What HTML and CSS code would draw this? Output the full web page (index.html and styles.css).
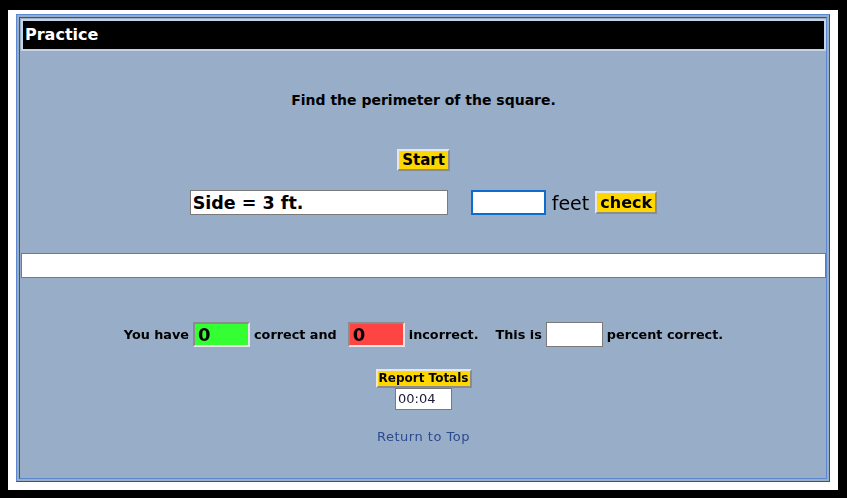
FILE: index.html
```html
<!DOCTYPE html>
<html lang="en">
<head>
    <meta charset="UTF-8">
    <title>Practice</title>
    <link rel="stylesheet" href="styles.css">
</head>
<body>
    <div class="page">
        <div class="frame">
            <div class="cell">
                <div class="title-bar">Practice</div>

                <p class="question">Find the perimeter of the square.</p>

                <div class="start-row">
                    <button class="btn btn-start">Start</button>
                </div>

                <div class="answer-row">
                    <input type="text" class="side-box" value="Side = 3 ft." readonly>
                    <input type="text" class="answer-box" autofocus>
                    <span class="unit">feet</span>
                    <button class="btn btn-check">check</button>
                </div>

                <div class="feedback"></div>

                <div class="score-row">
                    <span>You have</span>
                    <span class="score-box correct">0</span>
                    <span class="gap-sm">correct and</span>
                    <span class="score-box wrong">0</span>
                    <span class="gap-lg">incorrect.</span>
                    <span>This is</span>
                    <span class="score-box percent"></span>
                    <span>percent correct.</span>
                </div>

                <div class="totals">
                    <button class="btn btn-report">Report Totals</button>
                    <span class="timer">00:04</span>
                    <a href="#" class="top-link">Return to Top</a>
                </div>
            </div>
        </div>
    </div>
</body>
</html>
```

FILE: styles.css
```css
* {
    margin: 0;
    padding: 0;
    box-sizing: border-box;
}

body {
    background-color: #000;
    font-family: 'DejaVu Sans', Verdana, sans-serif;
    color: #000;
    padding: 10px 9px 8px 8px;
}

.page {
    background-color: #fff;
    padding: 4px 8px 8px 8px;
    width: 830px;
    height: 480px;
}

.frame {
    height: 100%;
    border: 1px solid;
    border-color: #5b88cf #2f568c #2f568c #5b88cf;
    background-color: #98adc8;
    padding: 2px;
}

.cell {
    height: 100%;
    border: 1px solid;
    border-color: #2f568c #5b88cf #5b88cf #2f568c;
    padding: 1px 0 0 1px;
    text-align: center;
}

.title-bar {
    background-color: #000;
    color: #fff;
    border: 2px solid #c6d3e4;
    font-weight: bold;
    font-size: 16px;
    text-align: left;
    height: 32px;
    line-height: 28px;
    padding-left: 2px;
}

.question {
    font-weight: bold;
    font-size: 14px;
    margin-top: 39px;
    height: 20px;
    line-height: 20px;
}

.start-row {
    margin-top: 39px;
    height: 22px;
}

.btn {
    font-family: 'DejaVu Sans', Verdana, sans-serif;
    font-weight: bold;
    background-color: #ffd700;
    color: #000;
    border: 2px solid;
    border-color: #e6e6e6 #8c8c8c #8c8c8c #e6e6e6;
}

.btn-start {
    width: 53px;
    height: 22px;
    font-size: 15px;
}

.answer-row {
    margin-top: 19px;
    display: flex;
    justify-content: center;
    align-items: center;
    height: 25px;
}

.side-box {
    width: 258px;
    height: 25px;
    border: 1px solid #7a7a7a;
    font-family: 'DejaVu Sans', Verdana, sans-serif;
    font-weight: bold;
    font-size: 17.5px;
    padding-left: 2px;
    color: #000;
    outline: none;
}

.answer-box {
    width: 75px;
    height: 25px;
    margin-left: 23px;
    border: 1px solid #0f6ccf;
    box-shadow: inset 0 0 0 1px #0f6ccf;
    outline: none;
    font-size: 16px;
}

.unit {
    font-size: 19px;
    margin: 0 6px;
}

.btn-check {
    width: 62px;
    height: 23px;
    font-size: 16px;
}

.feedback {
    margin-top: 38px;
    width: 805px;
    height: 25px;
    background-color: #fff;
    border: 1px solid #7a7a7a;
}

.score-row {
    margin-top: 44px;
    display: flex;
    justify-content: center;
    align-items: center;
    gap: 4px;
    font-weight: bold;
    font-size: 12.8px;
    height: 25px;
}

.score-box {
    width: 57px;
    height: 25px;
    border: 2px solid;
    border-color: #8c8c8c #e6e6e6 #e6e6e6 #8c8c8c;
    background-color: #fff;
    font-size: 18px;
    text-align: left;
    padding-left: 3px;
    line-height: 21px;
}

.correct {
    background-color: #33ff33;
}

.wrong {
    background-color: #ff4444;
}

.percent {
    border: 1px solid #7a7a7a;
}

.gap-sm {
    margin-right: 7px;
}

.gap-lg {
    margin-right: 13px;
}

.totals {
    margin-top: 22px;
    display: flex;
    flex-direction: column;
    align-items: center;
}

.btn-report {
    width: 96px;
    height: 19px;
    font-size: 12px;
    line-height: 13px;
}

.timer {
    width: 57px;
    height: 22px;
    background-color: #fff;
    border: 1px solid #7a7a7a;
    font-size: 13px;
    line-height: 20px;
    text-align: left;
    padding-left: 2px;
    color: #1a1a3a;
}

.top-link {
    margin-top: 19px;
    font-size: 13px;
    letter-spacing: 0.5px;
    color: #2c4a8e;
    text-decoration: none;
}
```
